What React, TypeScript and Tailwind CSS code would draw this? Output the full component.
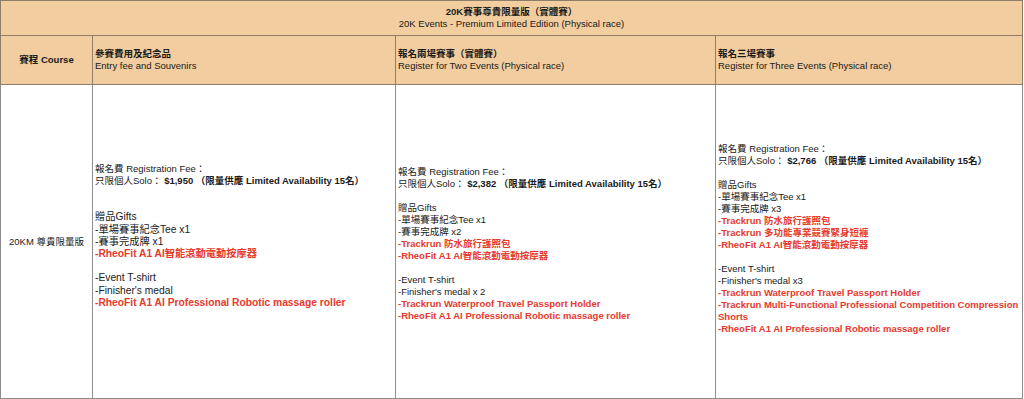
import React from "react";

type Line = { text?: string; red?: boolean };

const font = "font-['Liberation_Sans','Noto_Sans_CJK_TC',sans-serif]";

// each cell: fee line, then the gifts block; col 2 renders its gifts a touch larger in the source
const cells: { fee: string; lines: Line[]; lead: string; tail: string; gifts: string }[] = [
  {
    fee: "$1,950",
    lead: "",
    tail: "h-[11px]",
    gifts: "text-[10.25px] leading-[12.2px]",
    lines: [
      {},
      {},
      { text: "贈品Gifts" },
      { text: "-單場賽事紀念Tee x1" },
      { text: "-賽事完成牌 x1" },
      { text: "-RheoFit A1 AI智能滾動電動按摩器", red: true },
      {},
      { text: "-Event T-shirt" },
      { text: "-Finisher's medal" },
      { text: "-RheoFit A1 AI Professional Robotic massage roller", red: true },
    ],
  },
  {
    fee: "$2,382",
    lead: "h-[5px]",
    tail: "",
    gifts: "",
    lines: [
      {},
      { text: "贈品Gifts" },
      { text: "-單場賽事紀念Tee x1" },
      { text: "-賽事完成牌 x2" },
      { text: "-Trackrun 防水旅行護照包", red: true },
      { text: "-RheoFit A1 AI智能滾動電動按摩器", red: true },
      {},
      { text: "-Event T-shirt" },
      { text: "-Finisher's medal x 2" },
      { text: "-Trackrun Waterproof Travel Passport Holder", red: true },
      { text: "-RheoFit A1 AI Professional Robotic massage roller", red: true },
    ],
  },
  {
    fee: "$2,766",
    lead: "",
    tail: "h-[6px]",
    gifts: "",
    lines: [
      {},
      { text: "贈品Gifts" },
      { text: "-單場賽事紀念Tee x1" },
      { text: "-賽事完成牌 x3" },
      { text: "-Trackrun 防水旅行護照包", red: true },
      { text: "-Trackrun 多功能專業競賽緊身短褲", red: true },
      { text: "-RheoFit A1 AI智能滾動電動按摩器", red: true },
      {},
      { text: "-Event T-shirt" },
      { text: "-Finisher's medal x3" },
      { text: "-Trackrun Waterproof Travel Passport Holder", red: true },
      { text: "-Trackrun Multi-Functional Professional Competition Compression Shorts", red: true },
      { text: "-RheoFit A1 AI Professional Robotic massage roller", red: true },
    ],
  },
];

const headers = [
  { zh: "參賽費用及紀念品", en: "Entry fee and Souvenirs" },
  { zh: "報名兩場賽事（實體賽）", en: "Register for Two Events (Physical race)" },
  { zh: "報名三場賽事", en: "Register for Three Events (Physical race)" },
];

export default function App() {
  return (
    <div className={`w-[1024px] h-[399px] bg-white ${font} text-[9.5px] leading-[12px] text-[#1a1a1a]`}>
      <table className="w-[1023px] table-fixed border-collapse border border-[#858585]">
        <colgroup>
          <col className="w-[92px]" />
          <col className="w-[303px]" />
          <col className="w-[320px]" />
          <col />
        </colgroup>
        <thead>
          {/* Title row */}
          <tr className="h-[35px] bg-[#f1cd9f]">
            <th colSpan={4} className="border border-[#8d7e6a] text-center align-middle font-normal">
              <div className="font-bold">20K賽事尊貴限量版（實體賽）</div>
              <div>20K Events - Premium Limited Edition (Physical race)</div>
            </th>
          </tr>
          <tr className="h-[49px] bg-[#f1cd9f]">
            <th className="border border-[#8d7e6a] text-center align-middle font-bold">賽程 Course</th>
            {headers.map((h) => (
              <th key={h.en} className="border border-[#8d7e6a] pl-[2px] text-left align-middle font-normal">
                <div className="font-bold">{h.zh}</div>
                <div>{h.en}</div>
              </th>
            ))}
          </tr>
        </thead>
        <tbody>
          <tr className="h-[314px]">
            <td className="border border-[#8d8d8d] text-center align-middle">20KM 尊貴限量版</td>
            {cells.map((c) => (
              <td key={c.fee} className="border border-[#8d8d8d] pl-[2px] pr-0 align-middle">
                {c.lead && <div className={c.lead} />}
                <div>報名費 Registration Fee：</div>
                <div>
                  只限個人Solo： <span className="font-bold">{c.fee} （限量供應 Limited Availability 15名）</span>
                </div>
                <div className={c.gifts}>
                  {c.lines.map((l, i) =>
                    l.text ? (
                      <div key={i} className={l.red ? "font-bold text-[#e63a2e]" : ""}>
                        {l.text}
                      </div>
                    ) : (
                      <div key={i}>&nbsp;</div>
                    )
                  )}
                </div>
                {c.tail && <div className={c.tail} />}
              </td>
            ))}
          </tr>
        </tbody>
      </table>
    </div>
  );
}
